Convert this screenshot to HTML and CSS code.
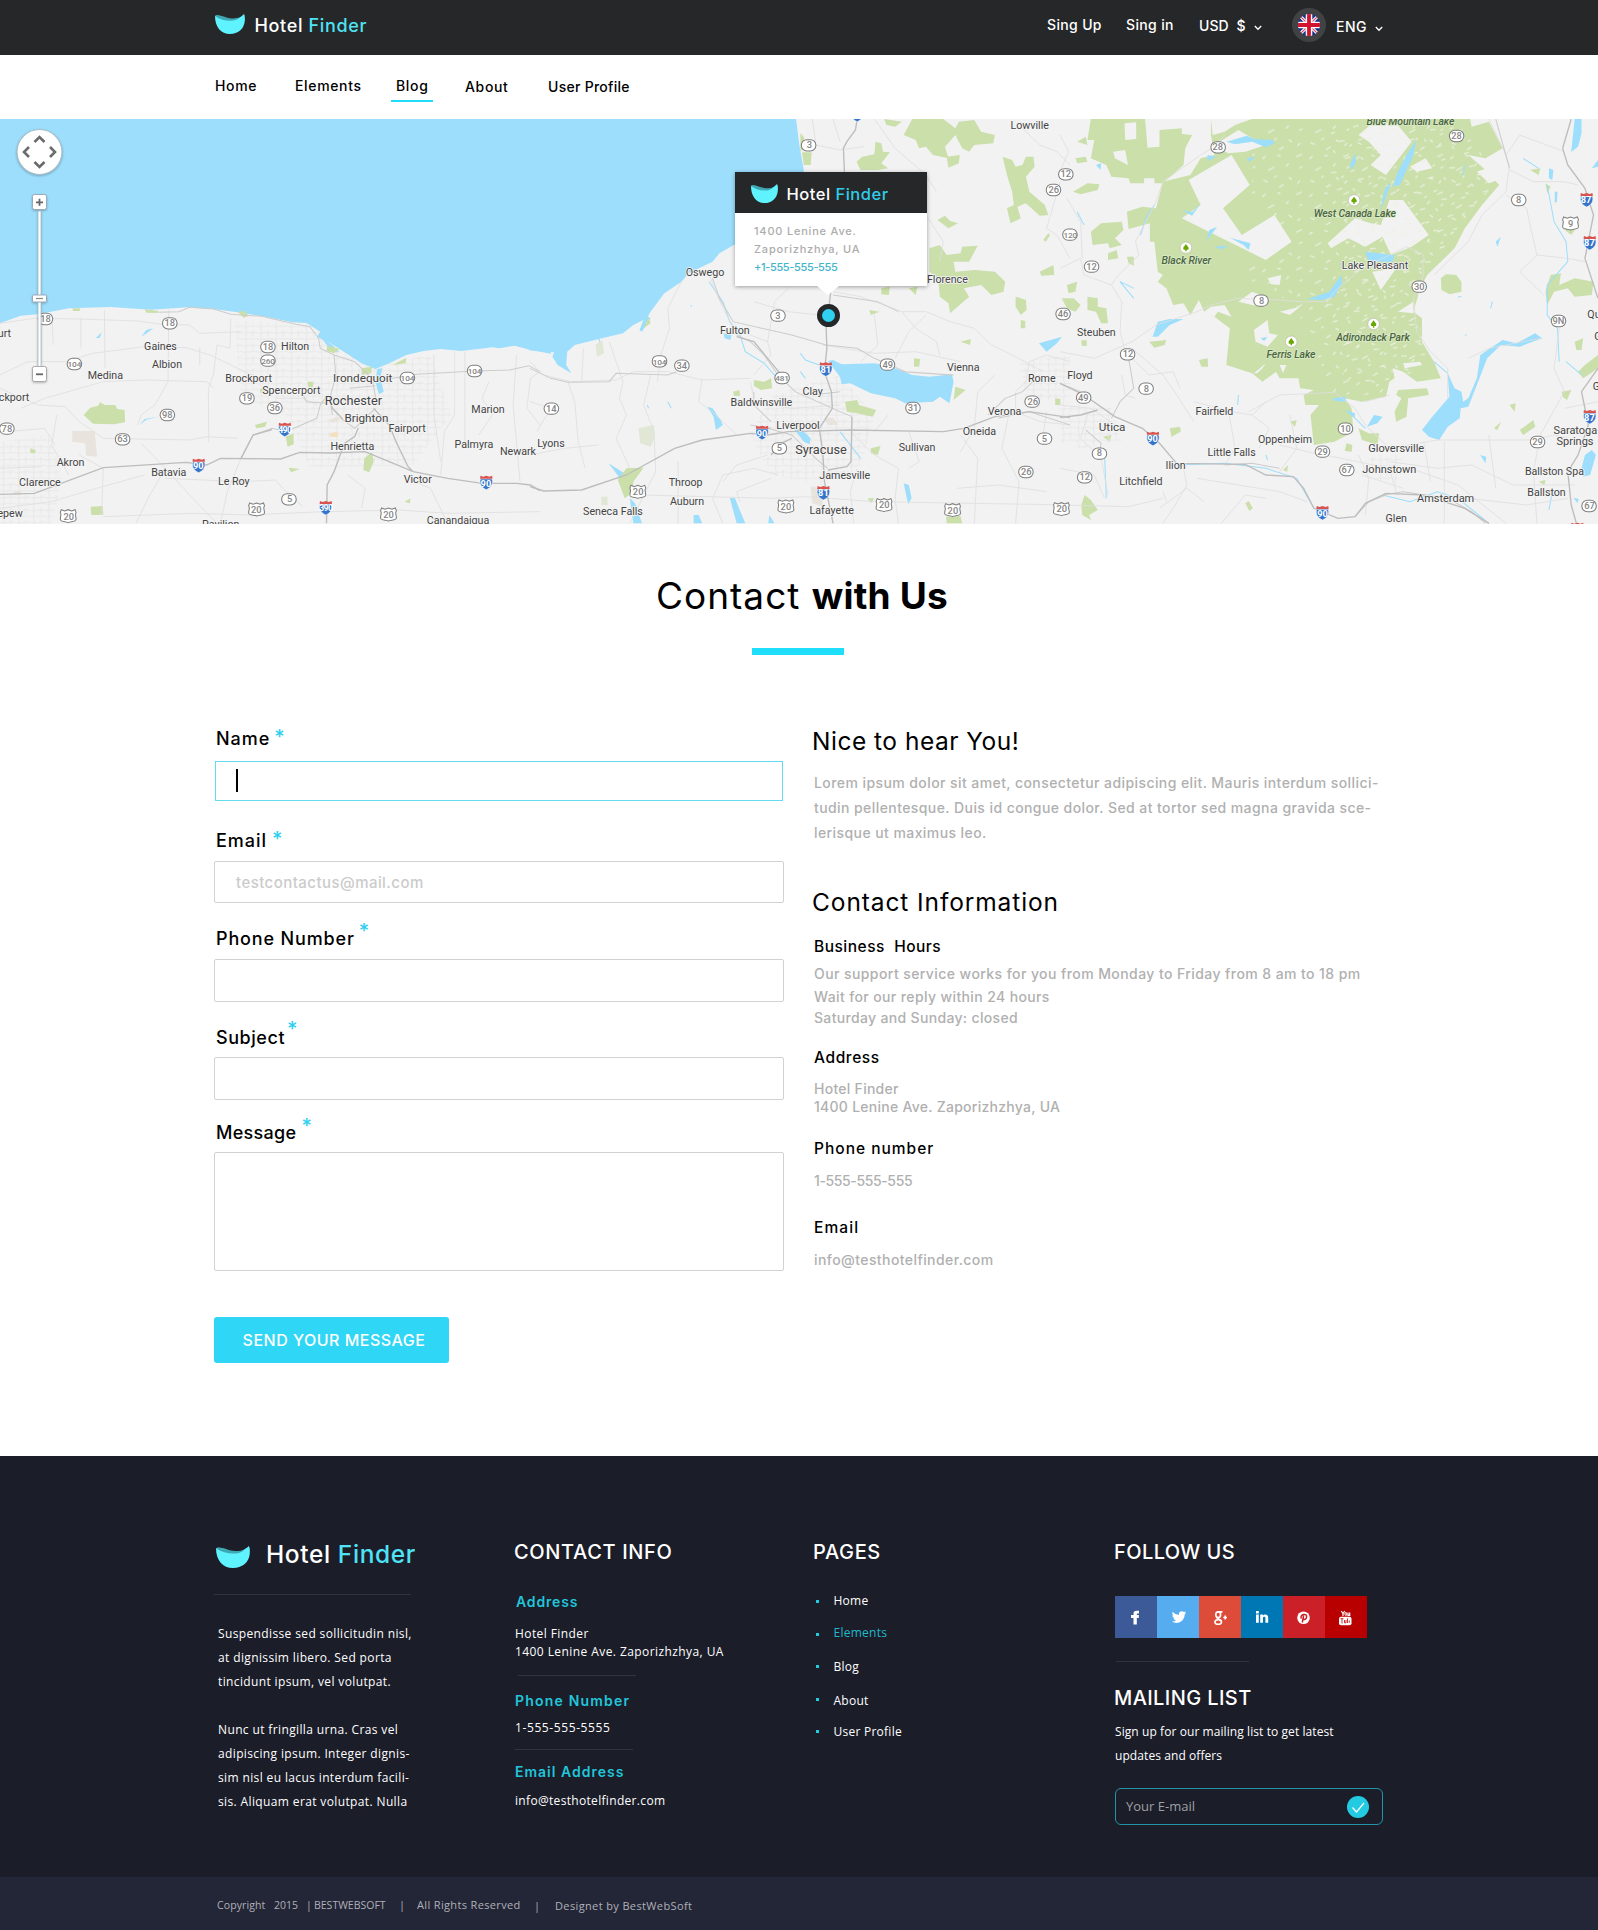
FILE: index.html
```html
<!DOCTYPE html>
<html lang="en">
<head>
<meta charset="utf-8">
<title>Hotel Finder - Contact</title>
<link rel="stylesheet" href="styles.css">
</head>
<body>
<svg class="defs" width="0" height="0" aria-hidden="true">
  <defs>
    <symbol id="logo" viewBox="0 0 30 20" preserveAspectRatio="none">
      <path d="M0 2C5 0 10 6 17 5.500 22 5.500 26 3 29 0 30 2 30 4 29.800 7 29 15 23 20 15 20 6 20 0 13 0 2Z" fill="#5ff3ff"/>
      <path d="M0 2C4-.5 11 4.500 17 4.500 20 4.600 23 4 25 3.300 21 8 9 8.500 0 2Z" fill="#3fa9b3"/>
    </symbol>
  </defs>
</svg>

<header class="topbar">
  <div class="wrap topbar-row">
    <a class="brand" href="#"><svg class="brand-mark"><use href="#logo"/></svg><span class="brand-name">Hotel <em>Finder</em></span></a>
    <div class="tools">
      <a class="signup" href="#">Sing Up</a>
      <a class="signin" href="#">Sing in</a>
      <span class="currency">USD&nbsp; $<svg class="chev" viewBox="0 0 8 6"><path d="M.8 1 4 4.300 7.200 1"/></svg></span>
      <span class="flag">
        <svg viewBox="0 0 22 22"><clipPath id="round"><circle cx="11" cy="11" r="11"/></clipPath>
          <g clip-path="url(#round)"><path fill="#14328c" d="M0 0h22v22H0z"/><path d="M0 0 22 22M22 0 0 22" stroke="#fff" stroke-width="3.200"/><path d="M0 0 22 22M22 0 0 22" stroke="#d8415a" stroke-width="1.200"/><path d="M11 0V22M0 11H22" stroke="#fff" stroke-width="6.600"/><path d="M11 0V22M0 11H22" stroke="#d2122e" stroke-width="3.800"/></g></svg>
      </span>
      <span class="lang">ENG<svg class="chev" viewBox="0 0 8 6"><path d="M.8 1 4 4.300 7.200 1"/></svg></span>
    </div>
  </div>
</header>

<nav class="mainnav">
  <div class="wrap nav-row">
    <a class="n1" href="#">Home</a>
    <a class="n2" href="#">Elements</a>
    <a class="n3 active" href="#">Blog</a>
    <a class="n4" href="#">About</a>
    <a class="n5" href="#">User Profile</a>
  </div>
</nav>

<section class="map">
<svg class="map-canvas" width="1598" height="405" viewBox="0 0 1598 405">
  <defs>
    <g id="sr"><rect x="-21" y="-17" width="42" height="34" rx="16" fill="#fff" stroke="#7d7d7d" stroke-width="3"/></g>
    <g id="us"><path d="M-20-19 -10-15 0-19 10-15 20-19 23-11C17-2 26 5 22 13 18 19 6 16 0 20-6 16-18 19-22 13-26 5-17-2-23-11Z" fill="#fff" stroke="#7d7d7d" stroke-width="3"/></g>
    <g id="is"><path d="M-17-10H17C21 4 14 16 0 22-14 16-21 4-17-10Z" fill="#3474cb" stroke="#fff" stroke-width="1.500"/><path d="M-17-20-9-17 0-20 9-17 17-20 18-11H-18Z" fill="#d9544f"/></g>
    <g id="park"><circle r="17" fill="#fff" stroke="#b9b9a8" stroke-width="2"/><path d="M0-11 8 0 7 6H2V11H-2V6H-7L-8 0Z" fill="#6aa800"/></g>
    <pattern id="streets" width="44" height="38" patternUnits="userSpaceOnUse"><path d="M0 9 44 6M0 27 44 25M12 0 9 38M31 0 30 20" fill="none" stroke="#e2e2e2" stroke-width="2"/></pattern>
    <pattern id="specks" width="137" height="113" patternUnits="userSpaceOnUse"><path d="M5 12 19 5M43 18 50 12M87 8 94 10M14 46 20 42M60 53 75 44M112 40 118 33M8 91 14 85M46 83 56 88M92 103 103 96M120 75 127 80M78 74 82 70" fill="none" stroke="#eef1e2" stroke-width="3.500" stroke-linecap="round"/></pattern>
    <pattern id="specks2" width="83" height="97" patternUnits="userSpaceOnUse" patternTransform="rotate(14)"><path d="M9 22 21 15M53 8 58 13M34 56 42 51M62 73 75 69M12 80 16 75" fill="none" stroke="#eef1e2" stroke-width="3.500" stroke-linecap="round"/></pattern>
  </defs>
  <rect width="1598" height="405" fill="#f2f2f2"/>

  <g transform="matrix(.34439 0 0 .33333 0 -4)">
    <path class="streets" d="M680 620H900L1000 720 1150 740 1250 720 1310 900 1200 1050 900 1060 830 900 700 850ZM0 980 150 960 180 1100 150 1225H0Z"/>
    <path class="water" d="M-3 0H1600V716L1540 705 1495 692 1450 700 1430 697 1340 708 1280 702 1230 708 1180 720 1130 745 1090 762 1050 745 960 685 920 665 930 650 890 624 850 622 770 605 690 592 620 582 545 577 440 584 320 576 200 580 110 598 60 602-3 626Z"/>
    <path class="water" d="M1095 762 1110 760 1104 790 1114 830 1100 838 1090 800ZM930 665 965 690 985 712 960 705ZM410 665 425 645 445 640 430 652ZM278 670 295 652 290 668ZM405 930 420 912 460 905 425 914Z"/>
    <path class="green" d="M243 900 262 878 285 872 290 862 305 870 335 870 340 882 362 885 363 922 330 928 270 926ZM263 1175 298 1173 300 1199 265 1200ZM740 930 775 920 770 935 745 940ZM830 965 852 955 853 988 835 995ZM1058 1030 1080 1012 1085 1040 1072 1072 1055 1065ZM1050 760 1080 755 1078 775 1050 780ZM690 590 710 588 722 602 708 608ZM950 692 985 702 970 715 948 708ZM838 1058 870 1062 845 1072ZM1175 1160 1192 1150 1190 1165ZM420 583 460 588 458 594 425 593ZM210 580H232V588H212ZM88 1000 104 1006 102 1014H88ZM755 822 770 820 768 833H756ZM893 800 910 800 908 818 895 815ZM1140 750 1180 728 1178 745Z"/>
    <path fill="#e8e3dc" d="M210 948 275 948 282 1025 250 1022 248 985 210 980ZM955 915 980 905 990 912 965 925ZM40 1130 62 1125 60 1140 38 1140Z"/>
    <path fill="#f3e0bf" d="M958 955 980 950 982 965 958 966Z"/>
    <path class="minor" d="M0 625 100 610 230 612 400 618 470 628 550 630 580 655 700 650M150 600 155 690M303 585 305 760M490 585 488 800 450 870 410 900 400 930M235 610 235 700M670 610 668 700 630 690 620 780 605 820 606 980M0 780 80 740 190 740 270 715 420 695 540 698 610 720 700 765 780 800M60 880 130 850 300 800 420 795 600 800 620 820M0 820 110 870 190 875 230 920 300 970 550 975 600 965 690 970M165 900 150 990 200 1080M230 1020 300 1060 295 1200M20 950 130 940 160 990M0 1060 120 1055M0 1180 150 1160 280 1120 420 1080M410 985 480 1060 560 1150 630 1225M480 1060 430 1150 395 1225M480 1090 700 1100 800 1095 830 1130 880 1175M700 1030 660 1130 640 1225M300 1205 560 1195 720 1200 940 1190 1160 1185 1300 1195 1568 1190M1010 1080 1060 1120 1050 1180M1260 720 1260 900 1280 1040M1320 710 1320 900 1290 950 1280 1080M1500 720 1490 870 1510 1100M1350 710 1350 1000M1568 770 1540 790 1530 880 1568 930M1180 1090 1250 1120 1300 1225M1390 960 1430 900 1400 850 1420 800M580 698V750M800 850 880 850 920 870"/>
    <path class="mid" d="M460 592 520 590 550 577 620 582 670 598 760 604 860 628 900 635 925 670 930 700 970 720 1030 740M970 720 975 780 958 850 965 900M1030 740 1080 790 1095 870M1110 795 1210 778 1380 768 1480 765 1535 752 1568 770M880 840 890 860 950 865M1015 820 1090 812M700 1030 735 960 790 940 830 950 920 910 930 870 950 840M990 910 1030 940 1090 880"/>
    <path class="main" d="M0 1138 100 1135 300 1058 540 1042 600 1050 640 1030 815 1032 870 1012 960 1014 1060 1010 1200 1070 1300 1090 1400 1105 1500 1105 1540 1110 1568 1127M700 1030 735 960 790 944M1040 940 1030 965 1000 985 970 1070 950 1110 948 1225M1085 880 1130 930 1150 980 1185 1055 1200 1070M958 850 965 880 995 912"/>
  </g>

  <g transform="matrix(.34439 0 0 .33333 530 -4)">
    <path class="streets" d="M700 840 900 780 1000 900 960 1060 850 1110 700 1080 640 960ZM1420 740 1568 720V860L1440 850Z"/>
    <path class="water" d="M-3 0H771L782 90 795 165 790 260 700 330 592 390 550 415 530 440 460 475 440 500 390 535 350 590 340 610 300 630 270 655 200 672 130 690 108 710 105 750 120 775 80 750 65 725 70 712-3 706Z"/>
    <path class="water" d="M865 738 880 735 905 748 1000 745 1050 755 1110 780 1160 785 1225 778 1230 800 1218 865 1190 845 1170 860 1090 865 1060 850 990 835 960 820 930 805 905 808 900 785ZM515 875 530 880 555 918 560 930 540 945 533 905ZM765 940 790 945 815 970 812 988 795 980ZM228 1045 290 1085 298 1130 275 1120 258 1085ZM290 1150 300 1225H325L305 1165ZM580 1148 595 1150 625 1225H600ZM475 1200 490 1200 500 1225H475ZM1085 1105 1100 1110 1108 1150 1098 1168ZM1478 685 1545 665 1530 685 1500 710ZM562 655 585 660 582 675 565 670ZM335 600 350 610 325 650 318 645ZM695 1200 710 1225H692Z"/>
    <path class="thinwater" d="M520 500 560 560 580 620 610 660 625 710 680 745 710 780 750 800M840 750 800 735 785 715M800 790 785 770M900 950 960 1030M400 860 410 880M468 570V575M200 670 210 710M340 870 345 880"/>
    <path class="green" d="M1028 12 1035 30 1060 35 1080 20ZM1085 60 1110 12H1200L1235 40 1245 20 1290 15 1310 50 1350 60 1345 85 1290 90 1275 110 1255 100 1235 60 1205 95 1215 130 1170 120 1150 95 1130 100 1120 75ZM1210 125 1248 120 1245 145 1215 158ZM948 140 965 125 1000 118 1003 80 1020 85 1025 110 1045 112 1020 145 1040 160 1010 165 960 165ZM785 55 795 65 800 90 785 110ZM790 112 818 112 815 150 795 150ZM1372 125 1400 135 1410 155 1430 150 1440 125 1462 125 1465 155 1440 185 1450 230 1495 270 1505 300 1480 302 1440 265 1415 275 1425 310 1395 325 1385 280 1405 270 1400 230 1385 180ZM1183 315 1205 302 1220 318 1243 325 1215 340ZM1490 375 1505 355 1510 360 1498 380ZM1160 400 1190 390 1210 420 1250 415 1255 395 1300 392 1275 440 1230 440 1235 470 1290 465 1350 470 1380 500 1375 530 1340 540 1310 510 1260 520 1275 545 1220 595 1215 565 1190 545 1185 490 1160 470ZM1480 470 1520 450 1522 480 1485 482ZM1410 545 1440 555 1442 585 1425 600 1410 575ZM1020 520 1045 515 1042 540 1020 538ZM1425 615 1438 618V640H1425ZM985 585 1015 590 990 600ZM1250 680 1280 672 1278 690ZM650 795 680 800 700 790 703 820 670 825 650 812ZM915 860 950 855 955 870 1005 885 995 905 950 895 920 890ZM590 830 608 825 610 842 592 843ZM1235 815 1265 825 1230 855ZM1525 850 1540 852V870H1525ZM990 1000 1018 993 1010 1020 990 1015ZM280 1060 330 1058 300 1100 300 1130 275 1150 255 1095ZM330 640 345 605 350 625ZM1208 1205 1250 1203 1255 1225H1210ZM1115 730 1133 732 1130 755 1115 755ZM980 1150H1000L990 1165ZM1100 520 1125 515 1120 540Z"/>
    <path fill="#e0e8d5" d="M190 690 210 675 215 715 195 725ZM315 940 360 930 362 970 350 995 320 985ZM207 1145 225 1145V1170H207Z"/>
    <path fill="#e8e3dc" d="M855 910 880 908 895 930 865 930ZM815 1115 830 1115 850 1150 850 1175 820 1165Z"/>
    <path class="minor" d="M520 480 545 545 590 640M440 500 400 580 405 640 380 720 370 800M155 700 150 800M230 680 270 800 260 850 280 900 250 970 290 1060M0 740 40 780 120 800 250 795 300 770 400 770 500 795 640 790M110 800 130 860 140 980 160 1060M350 780 330 870 360 950 365 1070 290 1225M500 790 490 860 540 900 600 960M0 860 60 880 20 950M590 640 690 680 710 560 750 520M690 680 700 720 650 780M640 800 650 850 620 870M650 560 750 590 840 600M880 530 960 545 1080 590 1150 590 1220 620 1290 640 1340 690 1400 720 1490 770M1000 600 1010 690 960 740M1080 590 1120 640 1180 680 1190 720M850 690 1000 715 1120 710 1250 740M1060 730 1100 650 1150 600M1150 300 1200 380 1190 440M880 12 900 80M820 12 830 90 900 105 970 95M1000 12 1060 100 1150 180 1180 230M1430 40 1480 90 1530 110 1568 150M1540 200 1500 340 1530 360 1568 430M1568 740 1500 720 1450 740 1440 800 1410 830 1410 880M1350 780 1300 830 1290 940 1250 1010M930 950 1000 1020 1070 1060 1060 1150 1070 1225M950 1060 930 1130 940 1225M700 1090 600 1130 610 1160M0 1020 100 1000 200 990M560 1100 600 1050 690 1020M430 1040 430 1225M560 1225 530 1150 560 1080 650 1060 720 1080M325 1140 700 1150 800 1145 1000 1160 1568 1170M1100 950 1130 1040 1100 1060M1250 960 1300 1030 1290 1225M1390 900 1370 1000 1420 1100 1410 1225M1500 890 1490 960M1568 930 1480 920 1410 890M1240 1120 1360 1110 1500 1130M1040 900 1000 950M700 870 760 880 900 870"/>
    <path class="mid" d="M0 760 60 790 110 802 230 800 250 775 400 780 425 770M530 490 550 550 590 620 760 660 860 690 950 700 1000 730 1090 770 1230 780M600 660 640 680 680 720 720 780 770 830 900 890 935 905M650 830 650 870 700 920M690 940 760 960 840 1040 865 1060M880 540 1010 560 1070 590M1568 930 1450 890 1360 910M1330 900 1380 850 1430 830 1480 780M1080 770 1220 780M820 840 900 830M700 940 640 930"/>
    <path class="main" d="M950 12 945 45 920 80 910 100 913 170M875 515 870 560 860 640 862 700 855 770 875 830 878 880 840 940 850 1010 855 1100 880 1225M0 1115 40 1128 150 1125 280 1080 420 1000 500 975 640 955 690 960 750 950 930 945 1200 950 1260 940 1350 905 1450 890 1568 908M700 1020 730 985 760 970M935 905 932 1040 920 1055 865 1065M600 665 650 680 690 730 730 780"/>
  </g>

  <g transform="matrix(.3431 0 0 .33333 1060 -4)">
    <path class="green" d="M90 12 80 75H100L90 130 135 150 150 185 200 190 205 205H245V190H275V205L300 205 360 150 365 100 385 60 355 57 355 40 290 45V95L255 98 248 12Z"/>
    <path class="green" d="M440 12 445 60 480 50 510 30 560 12H880L1000 12H1195L1200 35 1250 20 1290 100 1240 130 1190 120 1235 160 1280 210 1230 270 1180 340 1150 400 1070 480 1050 520 1030 590 1055 610V680L1090 740 1110 790 1040 800 1000 770 960 800 950 845 880 860 830 850 850 880 855 950 800 980 740 990 730 900 755 870 715 870 710 840 740 825 700 820 695 790 640 790 630 770 590 800 560 775 485 750 495 640 450 605 460 590 500 605 480 570 440 575 420 590 405 555 380 600 360 565 330 570 310 520 285 500 300 480 285 470 275 380H262V325L200 342 195 290 240 275 280 280 300 200 380 180 410 130 450 120 440 60Z"/>
    <path class="green" d="M90 350 120 325 180 320 185 345 160 370 180 390 145 400 140 385 95 390ZM140 415 165 405 170 430 140 435ZM195 425 215 425 215 452 200 445ZM38 230 80 205 115 208 110 225 60 238ZM45 130 75 125 80 140 50 145ZM50 80 75 65 80 90ZM1110 490 1125 478 1155 480 1170 500V530L1135 538 1112 525ZM80 545 110 550 110 575 135 580 140 625 120 625 105 590 80 585ZM5 550 40 550 60 570 45 590 20 580ZM260 680 310 675 305 690 275 698ZM62 676H78V693H64ZM985 825 1070 820 1075 840 1015 850 1010 905 980 920 975 890 995 850 980 840ZM835 985 852 990 850 1010 830 1008ZM405 735 430 730 432 755 412 755ZM870 940 900 955 930 955 925 990 880 975ZM320 940 350 935 352 950 325 965ZM670 920 690 915 685 935ZM62 1170 72 1140 90 1155 110 1185 85 1200 90 1215 65 1200ZM540 1165 550 1158 562 1180 552 1188ZM20 510 50 500 45 530 25 535ZM1415 530 1430 480 1460 475 1455 510 1500 490 1555 500 1550 540 1500 545 1480 520 1440 530 1420 570ZM1465 340 1500 345 1490 360ZM1415 205 1430 215 1420 235ZM1500 680 1525 670 1520 705 1505 705ZM1530 750 1568 720V760L1525 790 1510 770ZM1462 830 1490 825 1478 855 1465 845ZM1340 945 1380 915 1385 935 1350 960ZM1265 940 1285 920 1275 945ZM1370 165 1400 160 1395 180ZM650 1065 665 1050 662 1070ZM1395 1100 1415 1095 1412 1110ZM125 965 150 960 145 980ZM1310 870 1328 865 1325 890Z"/>
    <path class="land" d="M375 195 500 120 553 210 475 280 530 360 625 300 675 380 600 435 355 310 410 270ZM780 385 860 310 905 325 935 330 960 255H1000L1075 360 1025 395 965 420 940 365 890 395 840 370 790 400ZM870 60 910 25 980 25 1025 80 950 180 905 150 935 120 900 80ZM188 25 222 22V72L190 75ZM155 110 190 105 198 150 160 130ZM565 645 605 615 610 655 635 660 605 695 570 680ZM1020 155 1065 130 1085 160 1040 170ZM1215 170 1270 150 1290 190 1250 205ZM910 470 980 460 935 525ZM520 560 560 530 610 550 600 575 560 570ZM605 490 645 480 640 510 615 508ZM450 90 520 45 560 70 600 90 540 110 490 115ZM565 775 600 745 590 760 575 775ZM640 750 660 750 650 775ZM1000 745 1050 740 1055 750 1005 760ZM970 760 1000 770 1000 800 975 790ZM640 590 700 575 670 600ZM985 590 1030 560 1030 595Z"/>
    <path fill="url(#specks)" d="M620 20H1180L1270 200 1060 480 1040 600 1070 720 960 840 800 840 680 560 520 500 580 430 690 380 560 250 560 120Z"/>
    <path fill="url(#specks2)" d="M760 20H1180L1270 200 1060 480 1040 600 1070 720 960 840 830 800 760 560 840 430Z"/>
    <path class="water" d="M485 80 545 62 565 72 620 75 625 85 600 97 560 80 510 88ZM1038 75 1030 120 990 210 970 215 985 170 1010 120ZM965 205 935 285 940 250 950 215ZM820 480 822 505 800 545 765 555 720 553 785 530ZM890 410 975 420 970 440 900 440ZM845 150 860 115 862 140 850 165ZM1130 775 1150 820 1170 830 1175 860 1190 850 1215 790 1225 720 1290 675 1330 685 1385 655 1405 670 1340 695 1285 690 1245 730 1215 810 1190 875 1168 880 1165 910 1130 935 1105 975 1075 965 1055 945 1085 905 1135 845ZM895 935 915 900 940 905 925 925ZM1490 110 1500 12H1520V55L1510 95 1485 115ZM270 665 285 620 320 612 360 612 320 630 285 665ZM495 368 555 385 550 405 535 390ZM355 285 385 292 410 265 385 302ZM425 385 435 345 458 335 425 380ZM450 395 492 392 470 403ZM1520 1060 1530 1020 1550 1005 1562 1020 1545 1080 1525 1085ZM1225 1020 1242 1025 1240 1045ZM795 850 830 845 835 860 800 857ZM830 885 860 895 858 908ZM105 150 120 145 118 165ZM1425 160 1438 165 1435 195 1425 190ZM1442 230H1450L1448 262H1442ZM1270 380 1285 365 1275 395ZM1550 160 1568 135V155ZM585 670 605 665 595 678ZM430 120 455 125 430 138ZM545 130 570 125 550 140ZM1497 1148 1512 1152 1508 1165Z"/>
    <path class="thinwater" d="M215 520 175 500 215 550M235 360 250 310 275 270M1420 210 1440 320 1475 380 1480 440 1420 510 1420 600 1450 640 1455 740M1475 740 1520 780M340 1050 480 1045 600 1060 690 1090 740 1180M940 1140 1020 1160 1100 1130 1160 1150 1250 1225M840 890 890 940M1180 150 1175 180M1260 560 1255 580M1160 545H1170M1180 660H1185M50 290 70 330M600 1020 605 1035M520 840 518 870M1435 1130 1425 1185M1350 130 1395 160M130 1020 135 1150M1090 740 1130 775"/>
    <path class="minor" d="M0 60 25 110 0 170M0 460 60 430 70 480 150 510 180 560 175 650 190 710M20 250 60 320 65 430M150 510 170 480 230 420 220 380 280 260 300 200 410 120 450 95 480 60M0 710 100 730 210 680 280 630 400 590 440 570 520 550 640 555 700 560 780 560 800 530 880 460 960 420 1010 395 1060 420 1060 480 1030 550 1040 650 1080 710 1130 760 1130 850M210 700 300 780 340 840 390 920M190 710 260 780 330 770 350 820M550 890 640 840 800 832 860 880 890 930 950 990M390 860 500 890 560 900 600 860M490 880 510 1000 480 1050M670 900 690 1000 640 1070M560 900 610 940 580 1000M1290 90 1310 150 1300 230 1230 300 1190 380 1140 430 1090 480M1310 165 1380 200 1470 200 1510 210M1250 12 1300 120 1340 60 1470 110M1300 240 1360 280 1370 330 1390 420 1340 470 1410 540M1390 420 1480 430 1530 440M1190 730 1250 700 1400 670M1455 640 1440 760 1470 830 1400 960 1380 1070 1390 1225M960 1000 1100 975 1380 975 1440 960 1480 970M960 1040 1100 1060 1200 1050 1320 1110 1500 1110M1060 980 1080 1100M1120 980 1120 1225M1250 960 1270 1120M890 860 960 840M0 870 90 880 160 930M80 900 60 970 120 1030 140 1140M0 1060 100 1080 130 1150M290 1180 370 1120 420 1160M0 1170 200 1175 300 1150M360 1060 370 1110 330 1180 300 1225M400 1090 520 1110 640 1130 720 1160M640 990 720 1010 820 1030 960 1060 980 1130M470 1225 540 1140 600 1150M880 1080 1000 1120M1470 880 1568 860M1190 1150 1360 1170 1480 1150M870 1020 900 1090 890 1200M1020 1060 1160 1110 1300 1225M180 780 190 840 220 850M300 1130 310 1160"/>
    <path class="streets" d="M0 860 150 880 180 980 60 1000 0 980ZM900 1020 1000 1020 980 1110 920 1090Z"/>
    <path class="mid" d="M200 730 215 820 175 860 150 910M0 805 60 830M480 1050 560 1045 640 1060M950 1140 900 1160 860 1205M940 1140 1000 1130 1130 1150 1200 1190 1240 1225M75 945 120 985 110 1030M1270 12 1310 160"/>
    <path class="main" d="M0 908 60 900 110 885M0 805 70 840 160 905 240 940 290 985 340 1045 540 1048 600 1080 680 1085 710 1120 740 1180 810 1210 860 1205 890 1165 950 1135 1060 1140 1180 1180 1250 1225M1490 12 1465 100 1480 150 1530 220 1555 300 1530 430 1568 550M1568 760 1520 830 1540 930 1510 1020 1480 1070 1490 1170 1505 1225"/>
  </g>

  <g class="signs" transform="matrix(.34439 0 0 .33333 0 -4)">
    <use href="#sr" x="132" y="612"/><use href="#sr" x="493" y="625"/><use href="#sr" x="778" y="696"/><use href="#sr" x="778" y="737"/><use href="#sr" x="216" y="747"/><use href="#sr" x="1183" y="789"/><use href="#sr" x="1378" y="768"/><use href="#sr" x="717" y="850"/><use href="#sr" x="798" y="879"/><use href="#sr" x="486" y="900"/><use href="#sr" x="20" y="941"/><use href="#sr" x="356" y="973"/><use href="#sr" x="839" y="1153"/><use href="#us" x="198" y="1203"/><use href="#us" x="745" y="1183"/><use href="#us" x="1128" y="1198"/><use href="#is" x="827" y="943"/><use href="#is" x="577" y="1051"/><use href="#is" x="946" y="1178"/><use href="#is" x="1412" y="1102"/>
    <g class="num" transform="translate(0 9.500)"><text x="132" y="612">18</text><text x="493" y="625">18</text><text x="778" y="696">18</text><text class="n3d" x="778" y="737">260</text><text class="n3d" x="216" y="747">104</text><text class="n3d" x="1183" y="789">104</text><text class="n3d" x="1378" y="768">104</text><text x="717" y="850">19</text><text x="798" y="879">36</text><text x="486" y="900">98</text><text x="20" y="941">78</text><text x="356" y="973">63</text><text x="841" y="1153">5</text><text x="200" y="1205">20</text><text x="744" y="1184">20</text><text x="1128" y="1200">20</text></g>
    <g class="inum" transform="translate(0 10)"><text class="i3d" x="827" y="943">490</text><text x="576" y="1052">90</text><text class="i3d" x="946" y="1178">390</text><text x="1411" y="1105">90</text></g>
    <g class="town" transform="translate(0 10)"><text x="466" y="696">Gaines</text><text x="485" y="749">Albion</text><text x="306" y="783">Medina</text><text x="857" y="694">Hilton</text><text x="722" y="791">Brockport</text><text x="846" y="826">Spencerport</text><text class="t2" x="1053" y="792">Irondequoit</text><text class="t3" x="1026" y="861">Rochester</text><text class="t2" x="1064" y="910">Brighton</text><text x="1182" y="941">Fairport</text><text x="1023" y="994">Henrietta</text><text x="1417" y="883">Marion</text><text x="1376" y="989">Palmyra</text><text x="1504" y="1010">Newark</text><text x="205" y="1044">Akron</text><text x="490" y="1073">Batavia</text><text x="679" y="1099">Le Roy</text><text x="1213" y="1094">Victor</text><text x="116" y="1102">Clarence</text><text class="end" x="85" y="848">ckport</text><text class="end" x="32" y="655">urt</text><text class="end" x="66" y="1197">epew</text><text x="1330" y="1218">Canandaigua</text><text x="641" y="1229">Pavilion</text></g>
  </g>

  <g class="signs" transform="matrix(.34439 0 0 .33333 530 -4)">
    <use href="#sr" x="809" y="91"/><use href="#sr" x="1520" y="225"/><use href="#sr" x="720" y="602"/><use href="#sr" x="376" y="739"/><use href="#sr" x="441" y="752"/><use href="#sr" x="732" y="789"/><use href="#sr" x="1038" y="749"/><use href="#sr" x="62" y="881"/><use href="#sr" x="1112" y="879"/><use href="#sr" x="1458" y="860"/><use href="#sr" x="724" y="1000"/><use href="#sr" x="1494" y="971"/><use href="#sr" x="1440" y="1071"/><use href="#us" x="313" y="1130"/><use href="#us" x="743" y="1174"/><use href="#us" x="1028" y="1170"/><use href="#us" x="1227" y="1185"/><use href="#us" x="1543" y="1182"/><use href="#is" x="859" y="762"/><use href="#is" x="674" y="952"/><use href="#is" x="852" y="1133"/><use href="#is" x="950" y="-2"/>
    <g class="num" transform="translate(0 9.500)"><text x="811" y="91">3</text><text x="1521" y="225">26</text><text x="720" y="602">3</text><text class="n3d" x="376" y="740">104</text><text x="441" y="753">34</text><text class="n3d" x="732" y="789">481</text><text x="1039" y="749">49</text><text x="62" y="882">14</text><text x="1112" y="879">31</text><text x="1460" y="860">26</text><text x="724" y="1000">5</text><text x="1494" y="971">5</text><text x="1441" y="1071">26</text><text x="314" y="1132">20</text><text x="743" y="1176">20</text><text x="1029" y="1171">20</text><text x="1228" y="1187">20</text><text x="1544" y="1183">20</text></g>
    <g class="inum" transform="translate(0 10)"><text x="859" y="763">81</text><text x="674" y="955">90</text><text x="852" y="1133">81</text></g>
    <g class="town" transform="translate(0 10)"><text x="1451" y="33">Lowville</text><text x="508" y="474">Oswego</text><text x="1212" y="493">Florence</text><text x="595" y="647">Fulton</text><text x="821" y="829">Clay</text><text x="672" y="862">Baldwinsville</text><text x="778" y="931">Liverpool</text><text class="t3" x="845" y="1008">Syracuse</text><text x="914" y="1083">Jamesville</text><text x="876" y="1186">Lafayette</text><text x="1258" y="757">Vienna</text><text x="1486" y="792">Rome</text><text x="1378" y="891">Verona</text><text x="1305" y="950">Oneida</text><text x="1124" y="999">Sullivan</text><text x="61" y="986">Lyons</text><text x="452" y="1102">Throop</text><text x="456" y="1161">Auburn</text><text x="241" y="1189">Seneca Falls</text></g>
  </g>

  <g class="signs" transform="matrix(.3431 0 0 .33333 1060 -4)">
    <use href="#sr" x="17" y="178"/><use href="#sr" x="29" y="359"/><use href="#sr" x="92" y="455"/><use href="#sr" x="9" y="597"/><use href="#sr" x="197" y="718"/><use href="#sr" x="251" y="821"/><use href="#sr" x="69" y="848"/><use href="#sr" x="115" y="1016"/><use href="#sr" x="72" y="1087"/><use href="#sr" x="461" y="97"/><use href="#sr" x="1156" y="63"/><use href="#sr" x="1337" y="255"/><use href="#sr" x="586" y="557"/><use href="#sr" x="1047" y="515"/><use href="#sr" x="1453" y="618"/><use href="#sr" x="832" y="941"/><use href="#sr" x="765" y="1010"/><use href="#sr" x="836" y="1065"/><use href="#sr" x="1392" y="981"/><use href="#sr" x="1542" y="1173"/><use href="#us" x="1488" y="325"/><use href="#is" x="1535" y="254"/><use href="#is" x="1544" y="383"/><use href="#is" x="1544" y="905"/><use href="#is" x="271" y="970"/><use href="#is" x="765" y="1193"/><use href="#is" x="1508" y="1243"/>
    <use href="#park" x="857" y="256"/><use href="#park" x="367" y="398"/><use href="#park" x="914" y="627"/><use href="#park" x="674" y="680"/>
    <g class="num" transform="translate(0 9.500)"><text x="17" y="178">12</text><text class="n3d" x="30" y="359">120</text><text x="92" y="455">12</text><text x="9" y="597">46</text><text x="198" y="718">12</text><text x="252" y="821">8</text><text x="68" y="848">49</text><text x="115" y="1015">8</text><text x="72" y="1087">12</text><text x="460" y="97">28</text><text x="1156" y="64">28</text><text x="1337" y="255">8</text><text x="588" y="558">8</text><text x="1047" y="515">30</text><text x="1453" y="618">9N</text><text x="832" y="942">10</text><text x="765" y="1010">29</text><text x="836" y="1065">67</text><text x="1392" y="981">29</text><text x="1543" y="1174">67</text><text x="1488" y="326">9</text></g>
    <g class="inum" transform="translate(0 10)"><text x="1533" y="255">87</text><text x="1543" y="384">87</text><text x="1543" y="908">87</text><text x="270" y="971">90</text><text x="765" y="1195">90</text></g>
    <g class="town" transform="translate(0 10)"><text x="918" y="452">Lake Pleasant</text><text x="106" y="652">Steuben</text><text x="58" y="783">Floyd</text><text class="t2" x="152" y="939">Utica</text><text x="450" y="891">Fairfield</text><text x="656" y="975">Oppenheim</text><text x="500" y="1014">Little Falls</text><text x="337" y="1051">Ilion</text><text x="236" y="1101">Litchfield</text><text class="w" x="980" y="1002">Gloversville</text><text class="w" x="960" y="1063">Johnstown</text><text class="w" x="1124" y="1152">Amsterdam</text><text x="980" y="1210">Glen</text><text class="w" x="1502" y="947">Saratoga</text><text class="w" x="1501" y="979">Springs</text><text x="1441" y="1070">Ballston Spa</text><text x="1418" y="1134">Ballston</text><text class="start" x="1537" y="600">Qu</text><text class="start" x="1557" y="665">G</text><text class="start" x="1553" y="815">G</text></g>
    <g class="parks" transform="translate(0 10)"><text x="1021" y="19">Blue Mountain Lake</text><text x="859" y="296">West Canada Lake</text><text x="368" y="438">Black River</text><text x="912" y="667">Adirondack Park</text><text x="673" y="720">Ferris Lake</text></g>
  </g>

  <g class="controls">
    <circle cx="39.500" cy="33" r="22.500" fill="#fff" stroke="#a9bfca" stroke-width="1.200"/>
    <path d="M34.500 23 39.500 18 44.500 23M34.500 43 39.500 48 44.500 43M29 28 24 33 29 38M50 28 55 33 50 38" fill="none" stroke="#6b6b6b" stroke-width="2.600"/>
    <path d="M38 92H41V250H38Z" fill="#fff" stroke="#a5bcc7" stroke-width=".8"/>
    <rect x="32.500" y="75.500" width="14" height="15" rx="2" fill="#fff" stroke="#9ab"/><path d="M36 83.300H43M39.500 79.800V86.800" stroke="#666" stroke-width="1.800"/>
    <rect x="32.500" y="176" width="14" height="7" rx="1" fill="#fff" stroke="#9ab"/><path d="M36 179.500H43" stroke="#888" stroke-width="1.200"/>
    <rect x="32.500" y="247.500" width="14" height="15" rx="2" fill="#fff" stroke="#aaa"/><path d="M36 255.300H43" stroke="#666" stroke-width="1.800"/>
  </g>
  <circle cx="828.500" cy="196.500" r="9" fill="#2fd0f0" stroke="#262729" stroke-width="5"/>
</svg>
<div class="popup">
  <div class="popup-head"><svg class="popup-mark"><use href="#logo"/></svg><span class="popup-name">Hotel <em>Finder</em></span></div>
  <div class="popup-body">
    <p class="pa">1400 Lenine Ave.</p>
    <p class="pb">Zaporizhzhya, UA</p>
    <p class="pc">+1-555-555-555</p>
  </div>
</div>
</section>

<main class="wrap contact">
  <h1>Contact <b>with Us</b></h1>
  <div class="rule"></div>
  <div class="columns">
    <form class="form">
      <label class="l1">Name<i>*</i></label>
      <div class="field focus"><span class="caret"></span></div>
      <label class="l2">Email<i>*</i></label>
      <div class="field f2"><span class="ph">testcontactus@mail.com</span></div>
      <label class="l3">Phone Number<i>*</i></label>
      <div class="field f3"></div>
      <label class="l4">Subject<i>*</i></label>
      <div class="field f4"></div>
      <label class="l5">Message<i>*</i></label>
      <div class="field area"></div>
      <button type="button">SEND YOUR MESSAGE</button>
    </form>
    <div class="info">
      <h2>Nice to hear You!</h2>
      <p class="lorem">Lorem ipsum dolor sit amet, consectetur adipiscing elit. Mauris interdum sollici-<br>tudin pellentesque. Duis id congue dolor. Sed at tortor sed magna gravida sce-<br>lerisque ut maximus leo.</p>
      <h2 class="ci">Contact Information</h2>
      <h3 class="bh">Business&nbsp; Hours</h3>
      <p class="hours">Our support service works for you from Monday to Friday from 8 am to 18 pm</p>
      <p class="hours wait">Wait for our reply within 24 hours</p>
      <p class="hours sat">Saturday and Sunday: closed</p>
      <h3 class="ad">Address</h3>
      <p class="addr">Hotel Finder<br>1400 Lenine Ave. Zaporizhzhya, UA</p>
      <h3 class="pn">Phone number</h3>
      <p class="phone">1-555-555-555</p>
      <h3 class="em">Email</h3>
      <p class="mail">info@testhotelfinder.com</p>
    </div>
  </div>
</main>

<footer class="footer">
  <div class="wrap foot-cols">
    <div class="fc1">
      <div class="foot-brand"><svg class="foot-mark"><use href="#logo"/></svg><span class="foot-name">Hotel <em>Finder</em></span></div>
      <hr>
      <p>Suspendisse sed sollicitudin nisl,<br>at dignissim libero. Sed porta<br>tincidunt ipsum, vel volutpat.</p>
      <p>Nunc ut fringilla urna. Cras vel<br>adipiscing ipsum. Integer dignis-<br>sim nisl eu lacus interdum facili-<br>sis. Aliquam erat volutpat. Nulla</p>
    </div>
    <div class="fc2">
      <h4>CONTACT INFO</h4>
      <h5 class="a1">Address</h5>
      <p class="a2">Hotel Finder<br>1400 Lenine Ave. Zaporizhzhya, UA</p>
      <hr class="r1">
      <h5 class="a3">Phone Number</h5>
      <p class="a4">1-555-555-5555</p>
      <hr class="r2">
      <h5 class="a5">Email Address</h5>
      <p class="a6">info@testhotelfinder.com</p>
    </div>
    <div class="fc3">
      <h4>PAGES</h4>
      <ul>
        <li class="p1">Home</li>
        <li class="p2">Elements</li>
        <li class="p3">Blog</li>
        <li class="p4">About</li>
        <li class="p5">User Profile</li>
      </ul>
    </div>
    <div class="fc4">
      <h4>FOLLOW US</h4>
      <div class="social">
        <a class="fb" href="#"><svg viewBox="0 0 42 42"><path fill="#fff" d="M18.500 28.500V22H16V19H18.500V17.500C18.500 15 20 14.300 24 14.800V17.500C22.300 17.400 21.800 17.600 21.800 19H24L23.700 22H21.800V28.500Z"/></svg></a>
        <a class="tw" href="#"><svg viewBox="0 0 42 42"><path fill="#fff" transform="translate(-4.100 -4.200) scale(1.200)" d="M27.800 17.300c-.5.200-.9.300-1.400.4.500-.3.900-.8 1.100-1.400-.5.300-1 .5-1.600.6a2.500 2.500 0 0 0-4.200 2.300c-2.100-.1-3.900-1.100-5.200-2.600-.7 1.200-.3 2.600.8 3.300-.4 0-.8-.1-1.100-.3 0 1.200.9 2.200 2 2.500-.4.100-.8.100-1.100 0 .3 1 1.200 1.700 2.300 1.700a5 5 0 0 1-3.700 1c4.900 3 10.800-.1 10.800-6.100.5-.4 1-.8 1.300-1.400Z"/></svg></a>
        <a class="gp" href="#"><svg viewBox="0 0 42 42"><g fill="none" stroke="#fff" stroke-width="1.600"><ellipse cx="19.200" cy="18.700" rx="2.400" ry="2.800"/><ellipse cx="19.200" cy="26" rx="3.300" ry="2.300"/><path d="M19.500 15.900H23.500M18.200 21.300C17 22.700 22.300 23 22.300 25.200M24.300 21.500H28M26.200 19.600V23.400"/></g></svg></a>
        <a class="li" href="#"><svg viewBox="0 0 42 42"><path fill="#fff" d="M15 18.500H17.800V26.800H15ZM15 15H17.800V17.400H15ZM19.200 18.500H21.900V19.600C23 18 27.200 17.600 27.200 21.500V26.800H24.400V22C24.400 20.200 22 20.200 22 22V26.800H19.200Z"/></svg></a>
        <a class="pi" href="#"><svg viewBox="0 0 42 42"><circle cx="20.500" cy="21.700" r="6.300" fill="#fff"/><path d="M20.600 19.500 19.300 26.500M18.400 22.600C16.300 18.300 23.800 16.700 23.600 20.700 23.500 23.300 21 24.200 20.200 22.800" fill="none" stroke="#cb2027" stroke-width="1.500"/></svg></a>
        <a class="yt" href="#"><svg viewBox="0 0 42 42"><rect x="14" y="20.800" width="12.500" height="8.400" rx="2" fill="#fff"/><path d="M16.300 15 18 17.800V20M19.700 15 18 17.800M23 16.500V19.300H24.700V16.500" fill="none" stroke="#fff" stroke-width="1.200"/><ellipse cx="20.900" cy="18" rx="1" ry="1.500" fill="none" stroke="#fff"/><path d="M15.500 22.700H18.500M17 22.700V27.500M19.500 24V26.800H21V24M22.500 22.500V27M24.300 26.800V24.500" stroke="#b90000" stroke-width=".8" fill="none"/></svg></a>
      </div>
      <hr>
      <h4 class="ml">MAILING LIST</h4>
      <p>Sign up for our mailing list to get latest<br>updates and offers</p>
      <div class="subscribe"><span>Your E-mail</span><svg viewBox="0 0 22 22"><circle cx="11" cy="11" r="11" fill="#22cbe2"/><path d="M5.500 11.500 9.500 16 17 7" fill="none" stroke="#fff" stroke-width="1.200"/></svg></div>
    </div>
  </div>
  <div class="bottom">
    <div class="wrap bottom-row">
      <span class="b1">Copyright</span><span class="b2">2015</span><span class="b3">|</span><span class="b4">BESTWEBSOFT</span><span class="b5">|</span><span class="b6">All Rights Reserved</span><span class="b7">|</span><span class="b8">Designet by BestWebSoft</span>
    </div>
  </div>
</footer>
</body>
</html>
```
FILE: styles.css
```css
* { box-sizing: border-box; margin: 0; padding: 0; }
body { width: 1598px; background: #fff; color: #000; font-family: Inter, "Liberation Sans", sans-serif; font-weight: 500; }
a { color: inherit; text-decoration: none; }
em, i { font-style: normal; }
.defs { display: block; position: absolute; }
.wrap { width: 1170px; margin: 0 auto; }

/* top bar */
.topbar { height: 55px; background: #262729; color: #fff; }
.topbar-row { display: flex; justify-content: space-between; }
.brand { display: flex; padding-left: 1px; }
.brand-mark { width: 30px; height: 20px; margin-top: 14px; }
.brand-name { margin: 15px 0 0 9.500px; font-size: 18px; line-height: 22px; letter-spacing: .65px; }
.brand-name em, .foot-name em { color: #4fe3f5; }
.tools { display: flex; width: 337px; font-size: 14px; line-height: 20px; letter-spacing: .35px; white-space: nowrap; }
.tools > .signup { width: 79px; padding-top: 15px; }
.tools > .signin { width: 73px; padding-top: 15px; }
.currency { width: 92.500px; padding-top: 16px; letter-spacing: .1px; }
.chev { width: 8px; height: 6px; margin-left: 8px; overflow: visible; }
.chev path { fill: none; stroke: #fff; stroke-width: 1.300; }
.flag { width: 34px; height: 34px; margin-top: 8px; padding: 6px; border-radius: 50%; background: #414244; }
.flag svg { display: block; width: 22px; height: 22px; }
.lang { margin-left: 10.500px; padding-top: 17px; letter-spacing: .5px; }

/* navigation */
.mainnav { height: 64px; }
.nav-row { display: flex; padding-left: 1px; font-size: 14px; line-height: 20px; letter-spacing: .65px; white-space: nowrap; }
.nav-row a { padding-top: 21px; height: 47px; }
.n1 { width: 80px; }
.n2 { width: 96px; }
.nav-row .n3 { width: 42px; padding-left: 5px; border-bottom: 2px solid #20dcf8; }
.nav-row .n4, .nav-row .n5 { padding-top: 22px; }
.n4 { width: 83px; margin-left: 32px; }
.n5 { letter-spacing: .28px; }

/* map */
.map { position: relative; height: 405px; }
.map-canvas { display: block; font-family: Roboto, sans-serif; }
.water { fill: #9cdefc; }
.green { fill: #cadfaa; }
.land { fill: #f2f2f2; }
.streets { fill: url(#streets); }
.thinwater { fill: none; stroke: #9cdefc; stroke-width: 3; }
.minor { fill: none; stroke: #dfdfdf; stroke-width: 2.500; }
.mid { fill: none; stroke: #cccccc; stroke-width: 3; }
.main { fill: none; stroke: #bdbdbd; stroke-width: 4; }
.signs text { text-anchor: middle; }
.num { font-size: 27px; fill: #858585; }
.num .n3d { font-size: 24px; letter-spacing: -.5px; }
.inum { font-size: 27px; font-weight: 700; fill: #fff; }
.inum .i3d { font-size: 25px; letter-spacing: -1.500px; }
.town { font-size: 31px; font-weight: 400; fill: #444; }
.signs .town text, .signs .parks text { paint-order: stroke; stroke: #f5f5f5; stroke-width: 5px; stroke-linejoin: round; }
.town .t2 { font-size: 34px; }
.town .t3 { font-size: 37px; }
.town .w { font-size: 32px; }
.signs .town .end { text-anchor: end; }
.signs .town .start { text-anchor: start; }
.parks { font-size: 30.500px; font-style: italic; font-weight: 500; fill: #4b6741; letter-spacing: -.3px; }
.signs .parks text { stroke: #dbe9c6; }
.controls { filter: drop-shadow(0 1px 1px rgba(0, 0, 0, .25)); }
.popup { position: absolute; left: 735px; top: 53px; width: 192px; height: 114px; background: #fff; box-shadow: 0 1px 4px rgba(0, 0, 0, .35); }
.popup::after { content: ""; position: absolute; left: 82px; top: 114px; border: 11px solid transparent; border-top: 9px solid #fff; border-bottom: 0; }
.popup-head { display: flex; height: 41px; padding-left: 16px; background: #262729; color: #fff; }
.popup-mark { width: 27px; height: 19px; margin-top: 12px; }
.popup-name { margin: 11px 0 0 8.500px; font-size: 16.500px; line-height: 22px; letter-spacing: .5px; white-space: nowrap; }
.popup-name em { color: #2fcdea; }
.popup-body { padding: 9px 0 0 19px; font-size: 11px; line-height: 18px; color: #acacac; white-space: nowrap; }
.pa, .pb { letter-spacing: .8px; }
.pc { color: #41b5cb; letter-spacing: -.35px; }

/* contact */
.contact { height: 932px; padding-top: 50px; }
h1 { padding-left: 442px; font-size: 37px; line-height: 44px; font-weight: 400; letter-spacing: 1px; white-space: nowrap; }
h1 b { font-weight: 700; letter-spacing: .2px; }
.rule { width: 92px; height: 7px; margin: 30px 0 0 538px; background: #1fdefa; }
.columns { display: grid; grid-template-columns: 599px 1fr; }
.form { display: flex; flex-direction: column; align-items: flex-start; padding-top: 74px; }
.form label { display: flex; padding-left: 2px; font-size: 18px; line-height: 20px; }
.form label i { color: #2fd0f0; font-size: 20px; line-height: 20px; margin: -2px 0 0 4px; letter-spacing: 0; }
.l1 { letter-spacing: .95px; }
.l2 { letter-spacing: .95px; }
.l3 { letter-spacing: .85px; }
.l4 { letter-spacing: .55px; }
.l5 { letter-spacing: .3px; }
.form .l2 i { margin-left: 5px; }
.form .l3 i { margin-top: -8px; }
.form .l4 i { margin: -9px 0 0 2px; }
.form .l5 i { margin: -7px 0 0 5px; }
.field { width: 570px; height: 43px; border: 1px solid #d2d2d2; border-radius: 2px; }
.field.focus { width: 568px; height: 40px; margin: 12px 0 0 1px; border-color: #62dcee; border-radius: 0; }
.caret { display: block; width: 1.500px; height: 23px; margin: 7px 0 0 20px; background: #000; }
.form .l2 { margin-top: 30px; }
.f2 { height: 42px; margin-top: 10px; }
.ph { display: block; padding: 11px 0 0 21px; font-size: 15px; line-height: 20px; letter-spacing: .45px; color: #cbcbcb; }
.form .l3 { margin-top: 26px; }
.f3 { margin-top: 10px; }
.form .l4 { margin-top: 26px; }
.f4 { margin-top: 9px; }
.form .l5 { margin-top: 23px; }
.area { height: 119px; margin-top: 9px; }
button { width: 235px; height: 46px; margin-top: 46px; border: 0; border-radius: 3px; background: #2fd6f5; color: #fff; font: 500 16px/46px Inter, sans-serif; letter-spacing: .5px; padding-left: 5px; }
.info { white-space: nowrap; color: #b0b0b0; font-size: 14px; line-height: 20px; letter-spacing: .42px; padding-top: 71px; }
h2 { font-size: 24.500px; line-height: 30px; font-weight: 400; letter-spacing: .5px; color: #000; margin-left: -1px; }
h3 { font-size: 15.500px; line-height: 20px; font-weight: 500; color: #000; padding-left: 1px; }
.info p { padding-left: 1px; }
.lorem { margin-top: 14px; line-height: 25px; }
.ci { margin-top: 42px; letter-spacing: .9px; }
.bh { margin-top: 20px; letter-spacing: .5px; }
.hours { margin-top: 7px; }
.info .wait { margin-top: 3px; letter-spacing: .38px; }
.info .sat { margin-top: 1px; letter-spacing: .33px; }
.ad { margin-top: 20px; letter-spacing: .6px; }
.addr { margin-top: 12px; line-height: 18px; letter-spacing: .27px; }
.pn { margin-top: 23px; letter-spacing: 1px; }
.phone { margin-top: 12px; letter-spacing: -.38px; }
.em { margin-top: 27px; letter-spacing: 1.100px; }
.mail { margin-top: 12px; }

/* footer */
.footer { background: #1b1d29; color: #fff; }
.foot-cols { display: grid; grid-template-columns: 300px 299px 301px 1fr; height: 421px; padding-top: 84px; font: 400 12px/24px "Open Sans", sans-serif; white-space: nowrap; }
.footer hr { border: 0; height: 1px; background: #313340; }
.foot-brand { display: flex; height: 32px; padding: 2px 0 0 2px; font: 500 24.500px/30px Inter, sans-serif; }
.foot-mark { width: 34px; height: 22px; margin-top: 4px; }
.foot-name { margin-left: 16px; margin-top: -3px; letter-spacing: .6px; }
.fc1 hr { width: 197px; margin: 22px 0 27px 0; }
.fc1 p { padding-left: 4px; margin-bottom: 24px; letter-spacing: .37px; }
h4 { font: 500 20px/24px Inter, sans-serif; letter-spacing: .65px; }
h5 { font: 600 14px/20px Inter, sans-serif; color: #22c5d9; }
.a1 { margin: 28px 0 0 2px; letter-spacing: .85px; }
.a2 { margin: 13px 0 0 1px; line-height: 18px; letter-spacing: .42px; }
.fc2 .r1 { width: 118px; margin: 14px 0 0 4px; }
.a3 { margin: 15px 0 0 1px; letter-spacing: 1.200px; }
.a4 { margin: 8px 0 0 1px; line-height: 18px; letter-spacing: .6px; }
.fc2 .r2 { width: 118px; margin: 12px 0 0 1px; }
.a5 { margin: 12px 0 0 1px; letter-spacing: 1px; }
.a6 { margin: 10px 0 0 1px; line-height: 18px; letter-spacing: .32px; }
.fc3 ul { list-style: none; padding: 25px 0 0 3px; }
.fc3 li { display: flex; height: 32px; line-height: 24px; gap: 14.500px; letter-spacing: .25px; }
.fc3 li::before { content: ""; width: 3px; height: 3px; margin-top: 11px; background: #22cbe2; }
.fc3 .p2 { color: #22b9cc; }
.fc3 .p2::before { margin-top: 12px; }
.fc3 .p3, .fc3 .p4 { height: 34px; padding-top: 2px; }
.fc3 .p4 { height: 31px; }
.fc3 .p5 { padding-top: 2px; }
.fc3 .p3::before { margin-top: 10px; }
.fc3 .p4::before { margin-top: 9px; }
.fc3 .p5::before { margin-top: 10px; }
.fc4 h4 { letter-spacing: .4px; }
.social { display: flex; margin: 32px 0 0 1px; }
.social a { width: 42px; height: 42px; }
.social svg { display: block; width: 42px; height: 42px; }
.fb { background: #3c5a98; }
.tw { background: #55acee; }
.gp { background: #dd4b39; }
.li { background: #0077b5; }
.pi { background: #cb2027; }
.yt { background: #b90000; }
.fc4 hr { width: 133px; margin: 23px 0 0 2px; }
.ml { margin-top: 24px; }
.fc4 p { padding-left: 1px; margin-top: 10px; letter-spacing: .08px; }
.subscribe { display: flex; justify-content: space-between; width: 268px; height: 37px; margin: 20px 0 0 1px; padding: 0 13px 0 10px; border: 1px solid #2095a8; border-radius: 6px; font-size: 13px; line-height: 35px; color: #9fa0a5; }
.subscribe svg { width: 22px; height: 22px; margin-top: 7px; }
.bottom { height: 53px; background: #232637; }
.bottom-row { display: flex; padding: 16px 0 0 3px; font: 400 11px/24px "Open Sans", sans-serif; color: #b0b1b8; white-space: nowrap; }
.bottom-row span { flex: none; }
.b1 { width: 57px; font-size: 10.500px; letter-spacing: .1px; }
.b2 { width: 32px; font-size: 10.500px; }
.b3 { width: 8px; font-size: 10.500px; }
.b4 { width: 85px; font-size: 10.500px; }
.b5 { width: 18px; }
.b6 { width: 117px; letter-spacing: .35px; }
.b7 { width: 21px; padding-top: 1px; }
.b8 { padding-top: 1px; letter-spacing: .37px; }
```
